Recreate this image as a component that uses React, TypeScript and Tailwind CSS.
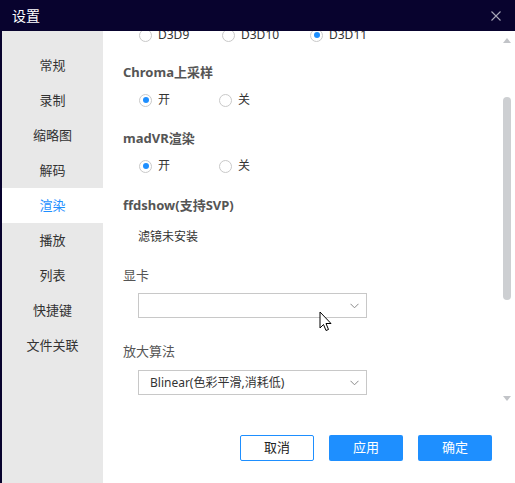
import { ReactNode } from 'react'

const font = { fontFamily: '"Noto Sans", "Noto Sans CJK SC", sans-serif' }

const menu = ['常规', '录制', '缩略图', '解码', '渲染', '播放', '列表', '快捷键', '文件关联']

function Radio({ checked, label, width }: { checked?: boolean; label: string; width: string }) {
  return (
    <div className={`flex items-center ${width}`}>
      <span className="w-[13px] h-[13px] rounded-full border border-[#c9c9c9] bg-white flex items-center justify-center">
        {checked && <span className="w-[6px] h-[6px] rounded-full bg-[#1e8fff]" />}
      </span>
      <span className="ml-[6px] text-[12px] text-[#333]">{label}</span>
    </div>
  )
}

function Label({ children, bold, className }: { children: ReactNode; bold?: boolean; className: string }) {
  return (
    <div
      className={`h-[20px] flex items-center text-[13px] text-[#555] ${bold ? 'font-bold' : ''} ${className}`}
    >
      {children}
    </div>
  )
}

function Select({ value, className }: { value?: string; className: string }) {
  return (
    <div
      className={`ml-[15px] w-[229px] h-[25px] border border-[#c8c8c8] flex items-center justify-between pl-[11px] pr-[7px] ${className}`}
    >
      <span className="text-[12px] text-[#333]">{value}</span>
      <svg width="9" height="6" viewBox="0 0 9 6">
        <path d="M0.5 0.8 L4.5 4.8 L8.5 0.8" fill="none" stroke="#8a8a8a" strokeWidth="1" />
      </svg>
    </div>
  )
}

export default function App() {
  return (
    <div
      style={font}
      className="relative w-[515px] h-[483px] bg-white border-l-2 border-[#08032e] flex flex-col overflow-hidden"
    >
      <div className="h-[31px] shrink-0 bg-[#08032e] flex items-center justify-between pl-[10px] pr-[14px]">
        <span className="text-[14px] text-white">设置</span>
        <svg width="10" height="10" viewBox="0 0 10 10">
          <path d="M0.5 0.5 L9.5 9.5 M9.5 0.5 L0.5 9.5" stroke="#a9a9b8" strokeWidth="1.1" />
        </svg>
      </div>

      <div className="flex flex-1">
        <div className="w-[101px] shrink-0 bg-[#e8e8e8] pt-[17px] flex flex-col">
          {menu.map((m) => (
            <div
              key={m}
              className={`h-[35px] flex items-center justify-center text-[13px] ${
                m === '渲染' ? 'bg-white text-[#1e8fff]' : 'text-[#333]'
              }`}
            >
              {m}
            </div>
          ))}
        </div>

        <div className="flex-1 flex flex-col">
          <div className="h-[374px] flex">
            <div className="flex-1 overflow-hidden pl-[20px]">
              <div className="-mt-[6px] flex flex-col">
                <div className="h-[20px] flex items-center pl-[16px]">
                  <Radio label="D3D9" width="w-[83px]" />
                  <Radio label="D3D10" width="w-[88px]" />
                  <Radio checked label="D3D11" width="w-[80px]" />
                </div>
                <Label bold className="mt-[18px]">
                  Chroma上采样
                </Label>
                <div className="mt-[7px] h-[20px] flex items-center pl-[16px]">
                  <Radio checked label="开" width="w-[80px]" />
                  <Radio label="关" width="w-[80px]" />
                </div>
                <Label bold className="mt-[19px]">
                  madVR渲染
                </Label>
                <div className="mt-[7px] h-[20px] flex items-center pl-[16px]">
                  <Radio checked label="开" width="w-[80px]" />
                  <Radio label="关" width="w-[80px]" />
                </div>
                <Label bold className="mt-[20px]">
                  ffdshow(支持SVP)
                </Label>
                <div className="mt-[11px] h-[20px] flex items-center pl-[15px] text-[12px] text-[#333]">
                  滤镜未安装
                </div>
                <Label className="mt-[19px]">显卡</Label>
                <Select className="mt-[7px]" />
                <Label className="mt-[24px]">放大算法</Label>
                <Select className="mt-[8px]" value="Blinear(色彩平滑,消耗低)" />
              </div>
            </div>

            <div className="w-[14px] shrink-0 flex flex-col items-center pr-[2px]">
              <svg className="mt-[7px]" width="8" height="5" viewBox="0 0 8 5">
                <path d="M0 5 L4 0 L8 5 Z" fill="#c2c4c8" />
              </svg>
              <div className="mt-[54px] w-[8px] h-[203px] rounded-[4px] bg-[#cdcfd2]" />
              <div className="flex-1" />
              <svg className="mb-[4px]" width="8" height="5" viewBox="0 0 8 5">
                <path d="M0 0 L4 5 L8 0 Z" fill="#c2c4c8" />
              </svg>
            </div>
          </div>

          <div className="flex justify-end pt-[30px] pr-[23px] gap-[15px]">
            <button className="w-[74px] h-[26px] rounded-[2px] border border-[#1e8fff] bg-white text-[13px] text-[#222]">
              取消
            </button>
            <button className="w-[74px] h-[26px] rounded-[2px] bg-[#1e8fff] text-[13px] text-white">
              应用
            </button>
            <button className="w-[74px] h-[26px] rounded-[2px] bg-[#1e8fff] text-[13px] text-white">
              确定
            </button>
          </div>
        </div>
      </div>

      <svg className="absolute left-[317px] top-[311px]" width="14" height="22" viewBox="0 0 14 22">
        <path
          d="M1 1 L1 17 L4.5 13.5 L7 19.5 L9.5 18.5 L7 12.5 L12 12.5 Z"
          fill="#fff"
          stroke="#000"
          strokeWidth="1"
          strokeLinejoin="miter"
        />
      </svg>
    </div>
  )
}
